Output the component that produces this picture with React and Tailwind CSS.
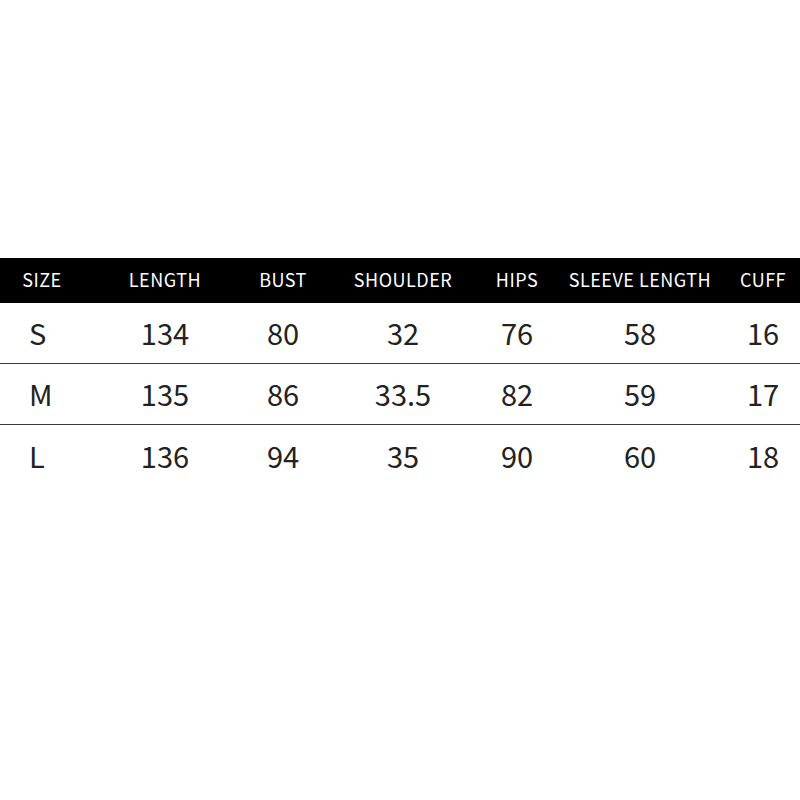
import React from "react";

const headers = ["SIZE", "LENGTH", "BUST", "SHOULDER", "HIPS", "SLEEVE LENGTH", "CUFF"];

const rows = [
  ["S", "134", "80", "32", "76", "58", "16"],
  ["M", "135", "86", "33.5", "82", "59", "17"],
  ["L", "136", "94", "35", "90", "60", "18"],
];

// column widths chosen so each column's centre lands where the chart has it
const gridCols = "grid grid-cols-[84px_162px_74px_166px_62px_184px_62px]";

export default function App() {
  return (
    <div
      className="w-[800px] h-[800px] bg-white pt-[258px]"
      style={{ fontFamily: '"Noto Sans CJK SC", "Noto Sans", sans-serif' }}
    >
      {/* Header */}
      <div className={`${gridCols} h-[45px] items-center bg-black text-white text-[18px] tracking-[0.5px] pb-[2px]`}>
        {headers.map((h) => (
          <div key={h} className="text-center whitespace-nowrap">
            {h}
          </div>
        ))}
      </div>

      {/* Rows */}
      {rows.map((row, i) => (
        <div
          key={row[0]}
          className={`${gridCols} h-[61px] items-center text-[#222] text-[29px] ${
            i < rows.length - 1 ? "border-b border-[#3a3a3a]" : ""
          }`}
        >
          {row.map((cell, j) => (
            <div
              key={j}
              className={j === 0 ? "pl-[29px] text-left" : "text-center whitespace-nowrap"}
            >
              {cell}
            </div>
          ))}
        </div>
      ))}
    </div>
  );
}
